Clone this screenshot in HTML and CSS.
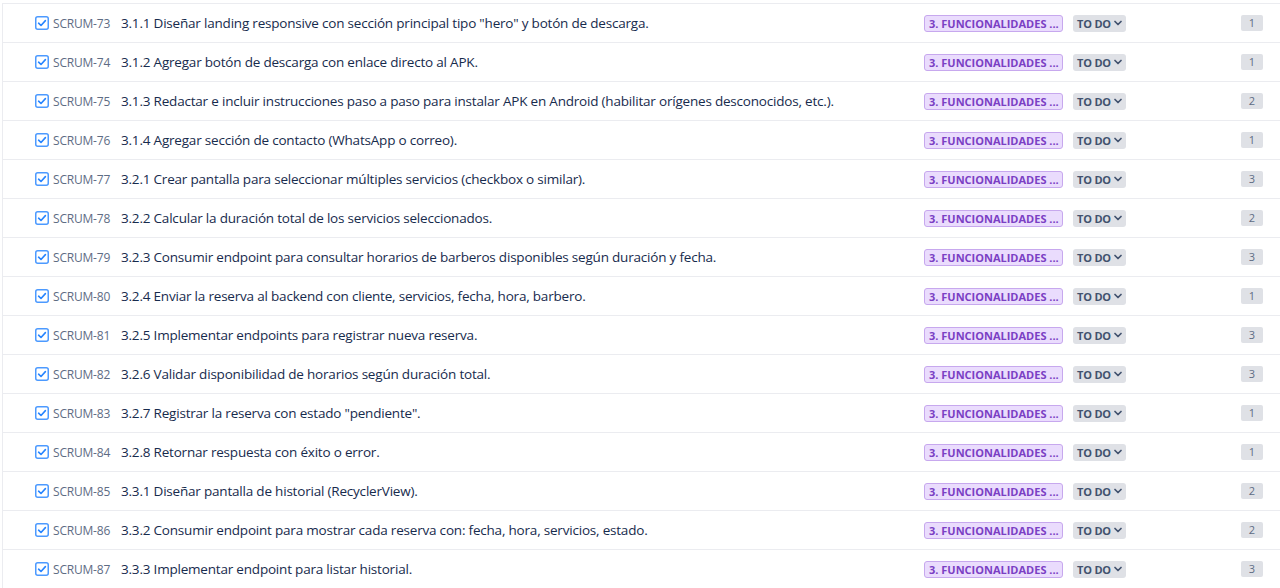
FILE: index.html
```html
<!DOCTYPE html>
<html lang="es">
<head>
<meta charset="utf-8">
<link rel="stylesheet" href="styles.css">
</head>
<body>
<div class="page">
  <div class="list">
    <div class="row"><span class="cb"><svg viewBox="0 0 14 14"><rect x="0.75" y="0.75" width="12.5" height="12.5" rx="2" /><path d="M3.6 7.2 L6 9.5 L10.4 4.6"/></svg></span><span class="key">SCRUM-73</span><span class="summary">3.1.1 Diseñar landing responsive con sección principal tipo "hero" y botón de descarga.</span><span class="epic">3. FUNCIONALIDADES ...</span><span class="status">TO DO <svg viewBox="0 0 8 6"><path d="M1 1.5 L4 4.5 L7 1.5"/></svg></span><span class="est">1</span></div>
    <div class="row"><span class="cb"><svg viewBox="0 0 14 14"><rect x="0.75" y="0.75" width="12.5" height="12.5" rx="2" /><path d="M3.6 7.2 L6 9.5 L10.4 4.6"/></svg></span><span class="key">SCRUM-74</span><span class="summary">3.1.2 Agregar botón de descarga con enlace directo al APK.</span><span class="epic">3. FUNCIONALIDADES ...</span><span class="status">TO DO <svg viewBox="0 0 8 6"><path d="M1 1.5 L4 4.5 L7 1.5"/></svg></span><span class="est">1</span></div>
    <div class="row"><span class="cb"><svg viewBox="0 0 14 14"><rect x="0.75" y="0.75" width="12.5" height="12.5" rx="2" /><path d="M3.6 7.2 L6 9.5 L10.4 4.6"/></svg></span><span class="key">SCRUM-75</span><span class="summary">3.1.3 Redactar e incluir instrucciones paso a paso para instalar APK en Android (habilitar orígenes desconocidos, etc.).</span><span class="epic">3. FUNCIONALIDADES ...</span><span class="status">TO DO <svg viewBox="0 0 8 6"><path d="M1 1.5 L4 4.5 L7 1.5"/></svg></span><span class="est">2</span></div>
    <div class="row"><span class="cb"><svg viewBox="0 0 14 14"><rect x="0.75" y="0.75" width="12.5" height="12.5" rx="2" /><path d="M3.6 7.2 L6 9.5 L10.4 4.6"/></svg></span><span class="key">SCRUM-76</span><span class="summary">3.1.4 Agregar sección de contacto (WhatsApp o correo).</span><span class="epic">3. FUNCIONALIDADES ...</span><span class="status">TO DO <svg viewBox="0 0 8 6"><path d="M1 1.5 L4 4.5 L7 1.5"/></svg></span><span class="est">1</span></div>
    <div class="row"><span class="cb"><svg viewBox="0 0 14 14"><rect x="0.75" y="0.75" width="12.5" height="12.5" rx="2" /><path d="M3.6 7.2 L6 9.5 L10.4 4.6"/></svg></span><span class="key">SCRUM-77</span><span class="summary">3.2.1 Crear pantalla para seleccionar múltiples servicios (checkbox o similar).</span><span class="epic">3. FUNCIONALIDADES ...</span><span class="status">TO DO <svg viewBox="0 0 8 6"><path d="M1 1.5 L4 4.5 L7 1.5"/></svg></span><span class="est">3</span></div>
    <div class="row"><span class="cb"><svg viewBox="0 0 14 14"><rect x="0.75" y="0.75" width="12.5" height="12.5" rx="2" /><path d="M3.6 7.2 L6 9.5 L10.4 4.6"/></svg></span><span class="key">SCRUM-78</span><span class="summary">3.2.2 Calcular la duración total de los servicios seleccionados.</span><span class="epic">3. FUNCIONALIDADES ...</span><span class="status">TO DO <svg viewBox="0 0 8 6"><path d="M1 1.5 L4 4.5 L7 1.5"/></svg></span><span class="est">2</span></div>
    <div class="row"><span class="cb"><svg viewBox="0 0 14 14"><rect x="0.75" y="0.75" width="12.5" height="12.5" rx="2" /><path d="M3.6 7.2 L6 9.5 L10.4 4.6"/></svg></span><span class="key">SCRUM-79</span><span class="summary">3.2.3 Consumir endpoint para consultar horarios de barberos disponibles según duración y fecha.</span><span class="epic">3. FUNCIONALIDADES ...</span><span class="status">TO DO <svg viewBox="0 0 8 6"><path d="M1 1.5 L4 4.5 L7 1.5"/></svg></span><span class="est">3</span></div>
    <div class="row"><span class="cb"><svg viewBox="0 0 14 14"><rect x="0.75" y="0.75" width="12.5" height="12.5" rx="2" /><path d="M3.6 7.2 L6 9.5 L10.4 4.6"/></svg></span><span class="key">SCRUM-80</span><span class="summary">3.2.4 Enviar la reserva al backend con cliente, servicios, fecha, hora, barbero.</span><span class="epic">3. FUNCIONALIDADES ...</span><span class="status">TO DO <svg viewBox="0 0 8 6"><path d="M1 1.5 L4 4.5 L7 1.5"/></svg></span><span class="est">1</span></div>
    <div class="row"><span class="cb"><svg viewBox="0 0 14 14"><rect x="0.75" y="0.75" width="12.5" height="12.5" rx="2" /><path d="M3.6 7.2 L6 9.5 L10.4 4.6"/></svg></span><span class="key">SCRUM-81</span><span class="summary">3.2.5 Implementar endpoints para registrar nueva reserva.</span><span class="epic">3. FUNCIONALIDADES ...</span><span class="status">TO DO <svg viewBox="0 0 8 6"><path d="M1 1.5 L4 4.5 L7 1.5"/></svg></span><span class="est">3</span></div>
    <div class="row"><span class="cb"><svg viewBox="0 0 14 14"><rect x="0.75" y="0.75" width="12.5" height="12.5" rx="2" /><path d="M3.6 7.2 L6 9.5 L10.4 4.6"/></svg></span><span class="key">SCRUM-82</span><span class="summary">3.2.6 Validar disponibilidad de horarios según duración total.</span><span class="epic">3. FUNCIONALIDADES ...</span><span class="status">TO DO <svg viewBox="0 0 8 6"><path d="M1 1.5 L4 4.5 L7 1.5"/></svg></span><span class="est">3</span></div>
    <div class="row"><span class="cb"><svg viewBox="0 0 14 14"><rect x="0.75" y="0.75" width="12.5" height="12.5" rx="2" /><path d="M3.6 7.2 L6 9.5 L10.4 4.6"/></svg></span><span class="key">SCRUM-83</span><span class="summary">3.2.7 Registrar la reserva con estado "pendiente".</span><span class="epic">3. FUNCIONALIDADES ...</span><span class="status">TO DO <svg viewBox="0 0 8 6"><path d="M1 1.5 L4 4.5 L7 1.5"/></svg></span><span class="est">1</span></div>
    <div class="row"><span class="cb"><svg viewBox="0 0 14 14"><rect x="0.75" y="0.75" width="12.5" height="12.5" rx="2" /><path d="M3.6 7.2 L6 9.5 L10.4 4.6"/></svg></span><span class="key">SCRUM-84</span><span class="summary">3.2.8 Retornar respuesta con éxito o error.</span><span class="epic">3. FUNCIONALIDADES ...</span><span class="status">TO DO <svg viewBox="0 0 8 6"><path d="M1 1.5 L4 4.5 L7 1.5"/></svg></span><span class="est">1</span></div>
    <div class="row"><span class="cb"><svg viewBox="0 0 14 14"><rect x="0.75" y="0.75" width="12.5" height="12.5" rx="2" /><path d="M3.6 7.2 L6 9.5 L10.4 4.6"/></svg></span><span class="key">SCRUM-85</span><span class="summary">3.3.1 Diseñar pantalla de historial (RecyclerView).</span><span class="epic">3. FUNCIONALIDADES ...</span><span class="status">TO DO <svg viewBox="0 0 8 6"><path d="M1 1.5 L4 4.5 L7 1.5"/></svg></span><span class="est">2</span></div>
    <div class="row"><span class="cb"><svg viewBox="0 0 14 14"><rect x="0.75" y="0.75" width="12.5" height="12.5" rx="2" /><path d="M3.6 7.2 L6 9.5 L10.4 4.6"/></svg></span><span class="key">SCRUM-86</span><span class="summary">3.3.2 Consumir endpoint para mostrar cada reserva con: fecha, hora, servicios, estado.</span><span class="epic">3. FUNCIONALIDADES ...</span><span class="status">TO DO <svg viewBox="0 0 8 6"><path d="M1 1.5 L4 4.5 L7 1.5"/></svg></span><span class="est">2</span></div>
    <div class="row"><span class="cb"><svg viewBox="0 0 14 14"><rect x="0.75" y="0.75" width="12.5" height="12.5" rx="2" /><path d="M3.6 7.2 L6 9.5 L10.4 4.6"/></svg></span><span class="key">SCRUM-87</span><span class="summary">3.3.3 Implementar endpoint para listar historial.</span><span class="epic">3. FUNCIONALIDADES ...</span><span class="status">TO DO <svg viewBox="0 0 8 6"><path d="M1 1.5 L4 4.5 L7 1.5"/></svg></span><span class="est">3</span></div>
  </div>
</div>
</body>
</html>
```
FILE: styles.css
```css
html, body {
  margin: 0;
  padding: 0;
  background: #ffffff;
  overflow: hidden;
}
.page {
  padding: 3px 0 0 2px;
  font-family: "Open Sans", "Noto Sans", sans-serif;
  color: #172b4d;
}
.list {
  border-top: 1px solid #ebecf0;
  border-left: 1px solid #ebecf0;
}
.row {
  display: flex;
  align-items: center;
  height: 38px;
  border-bottom: 1px solid #ebecf0;
  padding-left: 32px;
  padding-right: 17px;
}
.cb {
  width: 14px;
  height: 14px;
  flex: none;
  display: flex;
}
.cb svg {
  width: 14px;
  height: 14px;
  fill: #ffffff;
  stroke: #4c9aff;
  stroke-width: 1.5;
}
.cb svg path {
  fill: none;
  stroke: #2684ff;
  stroke-width: 1.6;
  stroke-linecap: round;
  stroke-linejoin: round;
}
.key {
  flex: none;
  width: 68px;
  margin-left: 4px;
  font-size: 12px;
  color: #5e6c84;
  letter-spacing: -0.2px;
}
.summary {
  flex: none;
  width: 803px;
  font-size: 13.5px;
  color: #172b4d;
  white-space: nowrap;
  overflow: hidden;
  letter-spacing: -0.2px;
}
.epic {
  flex: none;
  box-sizing: border-box;
  width: 139px;
  height: 17px;
  line-height: 15px;
  padding: 0 4px;
  background: #eadcfd;
  border: 1px solid #c7a8ee;
  border-radius: 3px;
  color: #7b3fc4;
  font-size: 11px;
  font-weight: 700;
  white-space: nowrap;
  overflow: hidden;
}
.status {
  flex: none;
  display: flex;
  align-items: center;
  gap: 3px;
  margin-left: 10px;
  height: 17px;
  padding: 0 4px;
  background: #dfe1e6;
  border-radius: 3px;
  color: #42526e;
  font-size: 11px;
  font-weight: 700;
  letter-spacing: -0.2px;
}
.status svg {
  width: 8px;
  height: 6px;
  fill: none;
  stroke: #42526e;
  stroke-width: 1.7;
  stroke-linecap: round;
  stroke-linejoin: round;
}
.est {
  flex: none;
  margin-left: auto;
  width: 22px;
  height: 16px;
  line-height: 16px;
  text-align: center;
  background: #dfe1e6;
  border-radius: 2px;
  color: #5e6c84;
  font-size: 11px;
}
```
